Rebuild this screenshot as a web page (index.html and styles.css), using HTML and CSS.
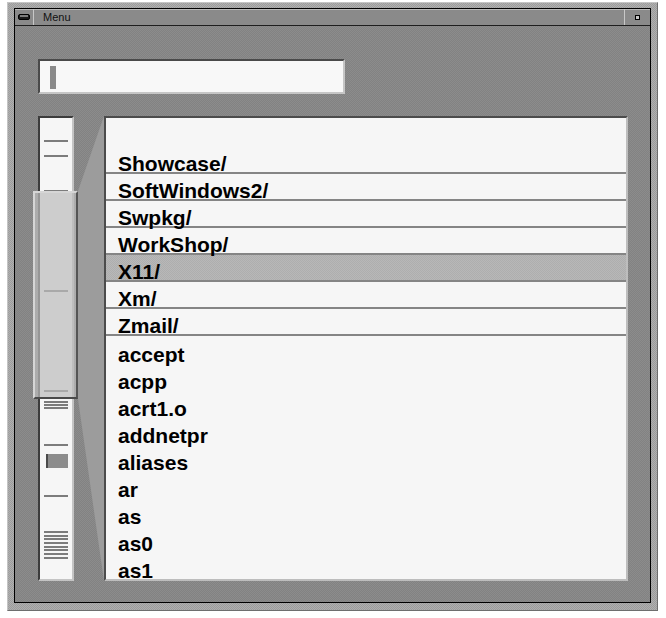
FILE: index.html
```html
<!DOCTYPE html>
<html>
<head>
<meta charset="utf-8">
<link rel="stylesheet" href="styles.css">
</head>
<body>
<div class="window">
  <div class="frame-inner">
    <div class="titlebar">
      <div class="tb-btn tb-left">
        <svg width="12" height="6" viewBox="0 0 12 6"><rect x="0.5" y="0.5" width="11" height="5" rx="1.5" fill="#1a1a1a" stroke="#000"/><rect x="2" y="1.5" width="8" height="1" fill="#e0e0e0"/></svg>
      </div>
      <div class="tb-title">Menu</div>
      <div class="tb-btn tb-right"><span class="dot"></span></div>
    </div>
    <div class="client">
      <div class="entry"><span class="cursor"></span></div>
      <div class="browser">
        <div class="overview">
          <span class="tick" style="top:22px"></span>
          <span class="tick" style="top:37px"></span>
          <span class="tick" style="top:72px"></span>
          <span class="tick" style="top:172px"></span>
          <span class="tick" style="top:272px"></span>
          <span class="tick" style="top:283px"></span>
          <span class="tick" style="top:286px"></span>
          <span class="tick" style="top:289px"></span>
          <span class="tick" style="top:326px"></span>
          <span class="tick block" style="top:336px"></span>
          <span class="tick" style="top:377px"></span>
          <span class="tick" style="top:413px"></span>
          <span class="tick" style="top:417px"></span>
          <span class="tick" style="top:420px"></span>
          <span class="tick" style="top:424px"></span>
          <span class="tick" style="top:428px"></span>
          <span class="tick" style="top:431px"></span>
          <span class="tick" style="top:435px"></span>
          <span class="tick" style="top:439px"></span>
          <div class="thumb"></div>
        </div>
        <svg class="wedge" width="30" height="465" viewBox="0 0 30 465"><polygon points="4,75 30,0 30,465 4,283" fill="#9c9c9c"/></svg>
        <div class="list">
          <div class="spacer"></div>
          <div class="row dir">Showcase/</div>
          <div class="row dir">SoftWindows2/</div>
          <div class="row dir">Swpkg/</div>
          <div class="row dir">WorkShop/</div>
          <div class="row dir selected">X11/</div>
          <div class="row dir">Xm/</div>
          <div class="row dir">Zmail/</div>
          <div class="row">accept</div>
          <div class="row">acpp</div>
          <div class="row">acrt1.o</div>
          <div class="row">addnetpr</div>
          <div class="row">aliases</div>
          <div class="row">ar</div>
          <div class="row">as</div>
          <div class="row">as0</div>
          <div class="row">as1</div>
        </div>
      </div>
    </div>
  </div>
</div>
</body>
</html>
```

FILE: styles.css
```css
html, body {
  margin: 0;
  padding: 0;
  background: #ffffff;
}

.window {
  margin: 2px 0 0 7px;
  width: 651px;
  height: 609px;
  box-sizing: border-box;
  padding: 5px 6px 7px 6px;
  background-color: #a6a6a6;
  background-image: repeating-conic-gradient(#9c9c9c 0 25%, #b0b0b0 0 50%);
  background-size: 2px 2px;
  border-top: 1px solid #c4c4c4;
  border-left: 1px solid #c4c4c4;
  border-right: 1px solid #6e6e6e;
  border-bottom: 1px solid #6e6e6e;
}

.frame-inner {
  height: 100%;
  box-sizing: border-box;
  border: 1px solid #000;
  background-color: #878787;
  background-image: repeating-conic-gradient(#828282 0 25%, #8c8c8c 0 50%);
  background-size: 2px 2px;
  display: flex;
  flex-direction: column;
}

.titlebar {
  height: 16px;
  flex: none;
  display: flex;
  align-items: stretch;
  background: #8a8a8a;
  border-bottom: 1px solid #1e1e1e;
  box-shadow: inset 0 1px 0 #b8b8b8;
}

.tb-btn {
  display: flex;
  align-items: center;
  justify-content: center;
  flex: none;
}

.tb-left {
  width: 18px;
  border-right: 1px solid #c8c8c8;
}

.tb-title {
  flex: 1;
  padding-left: 9px;
  font-family: "Liberation Sans", Arial, sans-serif;
  font-size: 11px;
  line-height: 16px;
  color: #111;
  border-right: 1px solid #c8c8c8;
}

.tb-right {
  width: 25px;
}

.dot {
  width: 3px;
  height: 3px;
  background: #c8c8c8;
  border: 1px solid #000;
}

.client {
  flex: 1;
  padding: 33px 0 0 23px;
  display: flex;
  flex-direction: column;
}

.entry {
  width: 307px;
  height: 35px;
  box-sizing: border-box;
  background: #f8f8f8;
  border-top: 2px solid #4a4a4a;
  border-left: 2px solid #4a4a4a;
  border-right: 2px solid #c6c6c6;
  border-bottom: 2px solid #c6c6c6;
  padding: 5px 0 0 10px;
}

.cursor {
  display: block;
  width: 6px;
  height: 23px;
  background: #8a8a8a;
}

.browser {
  margin-top: 22px;
  height: 465px;
  display: flex;
}

.overview {
  position: relative;
  width: 36px;
  flex: none;
  box-sizing: border-box;
  background: #f6f6f6;
  border-top: 2px solid #3c3c3c;
  border-left: 2px solid #3c3c3c;
  border-right: 2px solid #c4c4c4;
  border-bottom: 2px solid #c4c4c4;
}

.tick {
  position: absolute;
  left: 4px;
  width: 24px;
  height: 2px;
  background: #7c7c7c;
}

.tick.block {
  left: 6px;
  width: 22px;
  height: 14px;
  background: #8c8c8c;
  border-left: 2px solid #4a4a4a;
  box-sizing: border-box;
}

.thumb {
  position: absolute;
  left: -7px;
  top: 73px;
  width: 45px;
  height: 208px;
  box-sizing: border-box;
  background-color: rgba(188, 188, 188, 0.7);
  border-top: 2px solid #d6d6d6;
  border-left: 2px solid #d6d6d6;
  border-right: 2px solid #555;
  border-bottom: 2px solid #4a4a4a;
}

.wedge {
  display: block;
  flex: none;
}

.list {
  width: 524px;
  flex: none;
  box-sizing: border-box;
  background: #f6f6f6;
  border-top: 2px solid #4c4c4c;
  border-left: 2px solid #4c4c4c;
  border-right: 2px solid #bdbdbd;
  border-bottom: 2px solid #bdbdbd;
  overflow: hidden;
  font-family: "Liberation Sans", Arial, sans-serif;
  font-weight: bold;
  font-size: 21px;
  color: #000;
}

.spacer {
  height: 29px;
}

.row {
  height: 27px;
  box-sizing: border-box;
  padding: 7px 0 0 12px;
  line-height: 24px;
  overflow: visible;
  white-space: nowrap;
}

.row.dir {
  padding-top: 5px;
  border-bottom: 2px solid #858585;
}

.row.selected {
  background-color: #b3b3b3;
  background-image: repeating-conic-gradient(#aeaeae 0 25%, #b8b8b8 0 50%);
  background-size: 2px 2px;
}
```
